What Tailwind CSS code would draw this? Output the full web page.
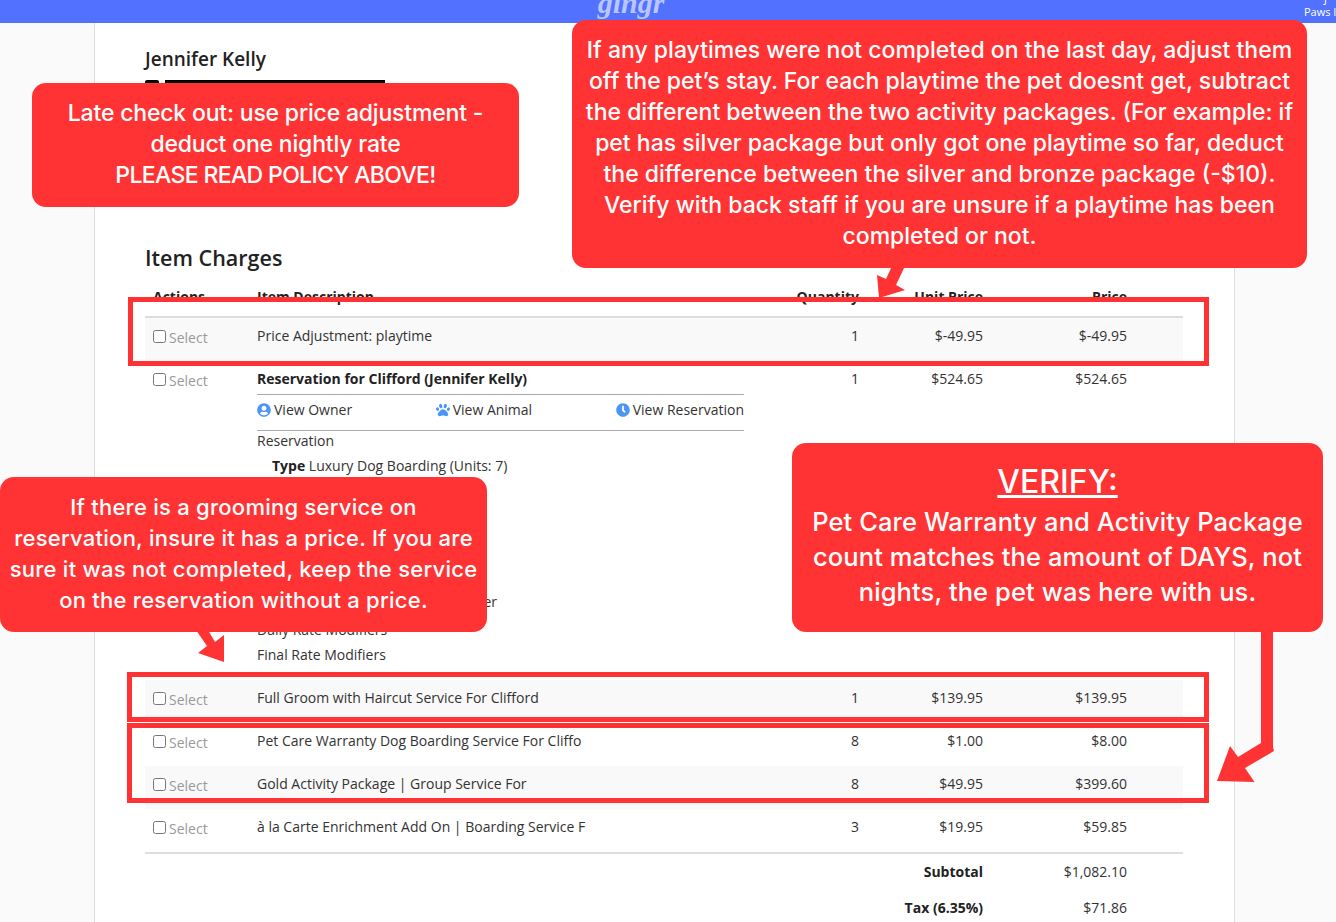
<!DOCTYPE html>
<html>
<head>
    <meta charset="utf-8" />
    <title>Invoice - Item Charges</title>
    <script src="https://cdn.jsdelivr.net/npm/@tailwindcss/browser@4"></script>
</head>
<body class="bg-[#fafafa] text-[#333333] font-['Open_Sans',sans-serif]">
    <div class="relative h-[922px] w-[1336px] overflow-hidden">
        <!-- top bar -->
        <header class="relative flex h-[23px] items-start justify-center overflow-hidden bg-[#5271ff]">
            <span class="ml-[-74px] mt-[-13px] font-['Liberation_Serif',serif] text-[30px] font-bold italic leading-[32px] text-[#b9c6ff]">gingr</span>
            <div class="absolute left-[1304px] top-[-8px] w-[60px] whitespace-nowrap text-[11px] leading-[13px] text-white">
                <div class="pl-[20px]">J</div>
                <div>Paws I</div>
            </div>
        </header>

        <!-- page content -->
        <main class="mx-[94px] h-[899px] w-[1141px] border-x border-[#dddddd] bg-white pl-[50px] pt-[23px]">
            <h2 class="text-[19px] font-semibold leading-[26px] text-[#222222]">Jennifer Kelly</h2>
            <div class="mt-[8px] flex h-[20px] gap-[6px]">
                <div class="h-full w-[14px] rounded-[2px] bg-black"></div>
                <div class="h-full w-[220px] bg-black"></div>
            </div>

            <h3 class="mt-[143px] text-[21.5px] font-semibold leading-[30px] text-[#222222]">Item Charges</h3>

            <table class="mt-[6px] w-[1038px] table-fixed border-collapse text-[14px] leading-[20px]">
                <thead>
                    <tr class="border-b-2 border-[#dddddd] font-bold text-[#222222]">
                        <th class="w-[104px] px-2 pb-[9px] pt-2 text-left">Actions</th>
                        <th class="w-[503px] px-2 pb-[9px] pt-2 text-left">Item Description</th>
                        <th class="w-[115px] px-2 pb-[9px] pt-2 text-right">Quantity</th>
                        <th class="w-[124px] px-2 pb-[9px] pt-2 text-right">Unit Price</th>
                        <th class="w-[144px] px-2 pb-[9px] pt-2 text-right">Price</th>
                        <th class="w-[48px]"></th>
                    </tr>
                </thead>
                <tbody>
                    <tr class="h-[44px] bg-[#f9f9f9] align-top">
                        <td class="px-2 pt-[10px]"><label class="flex items-center gap-[3px] text-[#999999]"><input class="mb-[4px]" type="checkbox" />Select</label></td>
                        <td class="px-2 pt-2">Price Adjustment: playtime</td>
                        <td class="px-2 pt-2 text-right">1</td>
                        <td class="px-2 pt-2 text-right">$-49.95</td>
                        <td class="px-2 pt-2 text-right">$-49.95</td>
                        <td></td>
                    </tr>
                    <tr class="align-top">
                        <td class="px-2 pt-[10px]"><label class="flex items-center gap-[3px] text-[#999999]"><input class="mb-[4px]" type="checkbox" />Select</label></td>
                        <td class="px-2 pb-[15px] pt-2">
                            <div class="font-bold text-[#222222]">Reservation for Clifford (Jennifer Kelly)</div>
                            <div class="mt-[5px] flex w-[487px] justify-between border-y border-[#aaaaaa] pb-[10px] pt-[5px]">
                                <a class="flex items-center gap-[3px]">
                                    <svg class="size-[14px] fill-[#4b96f5]" viewBox="0 0 496 512"><path d="M248 8C111 8 0 119 0 256s111 248 248 248 248-111 248-248S385 8 248 8zm0 96c48.600 0 88 39.400 88 88s-39.400 88-88 88-88-39.400-88-88 39.400-88 88-88zm0 344c-58.700 0-111.300-26.600-146.500-68.200 18.800-35.400 55.600-59.800 98.500-59.800 2.400 0 4.800.4 7.100 1.100 13 4.200 26.600 6.900 40.900 6.900 14.300 0 28-2.700 40.900-6.900 2.300-.7 4.700-1.100 7.100-1.100 42.900 0 79.700 24.400 98.500 59.800C359.300 421.400 306.700 448 248 448z"></path></svg>
                                    View Owner
                                </a>
                                <a class="flex items-center gap-[3px]">
                                    <svg class="size-[14px] fill-[#4b96f5]" viewBox="0 0 512 512"><path d="M256 224c-79.410 0-192 122.760-192 200.250 0 34.900 26.810 55.750 71.740 55.750 48.840 0 81.090-25.080 120.260-25.080 39.510 0 71.850 25.080 120.260 25.080 44.930 0 71.740-20.850 71.740-55.750C448 346.760 335.410 224 256 224zm-147.280-12.610c-10.400-34.650-42.440-57.090-71.560-50.130-29.120 6.960-44.290 40.690-33.890 75.340 10.400 34.650 42.440 57.090 71.560 50.130 29.120-6.960 44.290-40.690 33.890-75.340zm84.720-20.780c30.940-8.140 46.420-49.940 34.580-93.360s-46.520-72.010-77.460-63.870-46.420 49.940-34.580 93.360c11.840 43.420 46.520 72.010 77.460 63.870zm281.390-29.340c-29.120-6.960-61.150 15.480-71.560 50.130-10.400 34.650 4.770 68.380 33.890 75.340 29.120 6.960 61.150-15.480 71.560-50.130 10.400-34.650-4.770-68.380-33.890-75.340zm-156.270 29.340c30.940 8.140 65.620-20.450 77.460-63.870 11.840-43.420-3.640-85.210-34.580-93.360s-65.620 20.450-77.460 63.870c-11.840 43.420 3.640 85.220 34.580 93.360z"></path></svg>
                                    View Animal
                                </a>
                                <a class="flex items-center gap-[3px]">
                                    <svg class="size-[14px] fill-[#4b96f5]" viewBox="0 0 512 512"><path d="M256,8C119,8,8,119,8,256S119,504,256,504,504,393,504,256,393,8,256,8Zm92.490,313h0l-20,25a16,16,0,0,1-22.490,2.500h0l-67-49.720a40,40,0,0,1-15-31.230V112a16,16,0,0,1,16-16h32a16,16,0,0,1,16,16V256l58,42.500A16,16,0,0,1,348.490,321Z"></path></svg>
                                    View Reservation
                                </a>
                            </div>
                            <div>Reservation</div>
                            <div class="mt-[5px] pl-[15px]"><b class="text-[#222222]">Type</b> Luxury Dog Boarding (Units: 7)</div>
                            <div class="mt-[116px] w-[240px] text-right">er</div>
                            <div class="mt-2">Daily Rate Modifiers</div>
                            <div class="mt-[5px]">Final Rate Modifiers</div>
                        </td>
                        <td class="px-2 pt-2 text-right">1</td>
                        <td class="px-2 pt-2 text-right">$524.65</td>
                        <td class="px-2 pt-2 text-right">$524.65</td>
                        <td></td>
                    </tr>
                    <tr class="h-[43px] bg-[#f9f9f9] align-top">
                        <td class="px-2 pt-[10px]"><label class="flex items-center gap-[3px] text-[#999999]"><input class="mb-[4px]" type="checkbox" />Select</label></td>
                        <td class="px-2 pt-2">Full Groom with Haircut Service For Clifford</td>
                        <td class="px-2 pt-2 text-right">1</td>
                        <td class="px-2 pt-2 text-right">$139.95</td>
                        <td class="px-2 pt-2 text-right">$139.95</td>
                        <td></td>
                    </tr>
                    <tr class="h-[43px] align-top">
                        <td class="px-2 pt-[10px]"><label class="flex items-center gap-[3px] text-[#999999]"><input class="mb-[4px]" type="checkbox" />Select</label></td>
                        <td class="px-2 pt-2">Pet Care Warranty Dog Boarding Service For Cliffo</td>
                        <td class="px-2 pt-2 text-right">8</td>
                        <td class="px-2 pt-2 text-right">$1.00</td>
                        <td class="px-2 pt-2 text-right">$8.00</td>
                        <td></td>
                    </tr>
                    <tr class="h-[43px] bg-[#f9f9f9] align-top">
                        <td class="px-2 pt-[10px]"><label class="flex items-center gap-[3px] text-[#999999]"><input class="mb-[4px]" type="checkbox" />Select</label></td>
                        <td class="px-2 pt-2">Gold Activity Package | Group Service For</td>
                        <td class="px-2 pt-2 text-right">8</td>
                        <td class="px-2 pt-2 text-right">$49.95</td>
                        <td class="px-2 pt-2 text-right">$399.60</td>
                        <td></td>
                    </tr>
                    <tr class="h-[44px] border-b-2 border-[#dddddd] align-top">
                        <td class="px-2 pt-[10px]"><label class="flex items-center gap-[3px] text-[#999999]"><input class="mb-[4px]" type="checkbox" />Select</label></td>
                        <td class="px-2 pt-2">à la Carte Enrichment Add On | Boarding Service F</td>
                        <td class="px-2 pt-2 text-right">3</td>
                        <td class="px-2 pt-2 text-right">$19.95</td>
                        <td class="px-2 pt-2 text-right">$59.85</td>
                        <td></td>
                    </tr>
                    <tr class="h-[37px] align-top">
                        <td colspan="3"></td>
                        <td class="px-2 pt-2 text-right font-bold text-[#222222]">Subtotal</td>
                        <td class="px-2 pt-2 text-right">$1,082.10</td>
                        <td></td>
                    </tr>
                    <tr class="h-[36px] align-top">
                        <td colspan="3"></td>
                        <td class="whitespace-nowrap px-2 pt-2 text-right font-bold text-[#222222]">Tax (6.35%)</td>
                        <td class="px-2 pt-2 text-right">$71.86</td>
                        <td></td>
                    </tr>
                </tbody>
            </table>
        </main>

        <!-- annotation highlights -->
        <div class="absolute left-[128px] top-[297px] h-[69px] w-[1081px] border-[5px] border-[#ff3333]"></div>
        <div class="absolute left-[127px] top-[672px] h-[50px] w-[1082px] border-[5px] border-[#ff3333]"></div>
        <div class="absolute left-[127px] top-[723px] h-[80px] w-[1082px] border-[5px] border-[#ff3333]"></div>

        <!-- annotation arrows -->
        <svg class="absolute left-0 top-0 fill-[#ff3333]" width="1336" height="922" viewBox="0 0 1336 922">
            <polygon points="892,266 905,266 896,285 905,290 879,298 877,275 886,279"></polygon>
            <polygon points="196,630 208,630 215,642 224,635 224,662 198,653 207,646"></polygon>
            <polygon points="1261,630 1273,630 1273,747 1274,751 1245,768 1254.500,782 1217,781 1230,746 1238,757 1261,743"></polygon>
        </svg>

        <!-- annotation callouts -->
        <div class="absolute left-[32px] top-[83px] flex h-[124px] w-[487px] items-center justify-center rounded-[14px] bg-[#ff3333] pb-[1px] text-center font-['Inter',sans-serif] text-[23px] font-[450] leading-[31px] tracking-[-0.18px] text-white">
            <p class="whitespace-nowrap">Late check out: use price adjustment -<br />deduct one nightly rate<br /><span class="tracking-[-0.65px]">PLEASE READ POLICY ABOVE!</span></p>
        </div>
        <div class="absolute left-[572px] top-[20px] flex h-[248px] w-[735px] items-center justify-center rounded-[14px] bg-[#ff3333] pb-[1px] text-center font-['Inter',sans-serif] text-[23px] font-[450] leading-[31px] text-white">
            <p class="whitespace-nowrap">If any playtimes were not completed on the last day, adjust them<br />off the pet’s stay. For each playtime the pet doesnt get, subtract<br />the different between the two activity packages. (For example: if<br />pet has silver package but only got one playtime so far, deduct<br />the difference between the silver and bronze package (-$10).<br />Verify with back staff if you are unsure if a playtime has been<br />completed or not.</p>
        </div>
        <div class="absolute left-0 top-[477px] flex h-[155px] w-[487px] items-center justify-center rounded-[14px] bg-[#ff3333] pb-[1px] text-center font-['Inter',sans-serif] text-[22px] font-medium leading-[31px] tracking-[0.25px] text-white">
            <p class="whitespace-nowrap">If there is a grooming service on<br />reservation, insure it has a price. If you are<br />sure it was not completed, keep the service<br />on the reservation without a price.</p>
        </div>
        <div class="absolute left-[792px] top-[443px] flex h-[189px] w-[531px] flex-col items-center justify-center rounded-[14px] bg-[#ff3333] pb-[7px] text-center font-['Inter',sans-serif] text-white">
            <div class="text-[32px] font-[450] leading-[45px] underline">VERIFY:</div>
            <p class="whitespace-nowrap text-[25.5px] font-medium leading-[35px] tracking-[0.1px]">Pet Care Warranty and Activity Package<br />count matches the amount of DAYS, not<br />nights, the pet was here with us.</p>
        </div>
    </div>
</body>
</html>
